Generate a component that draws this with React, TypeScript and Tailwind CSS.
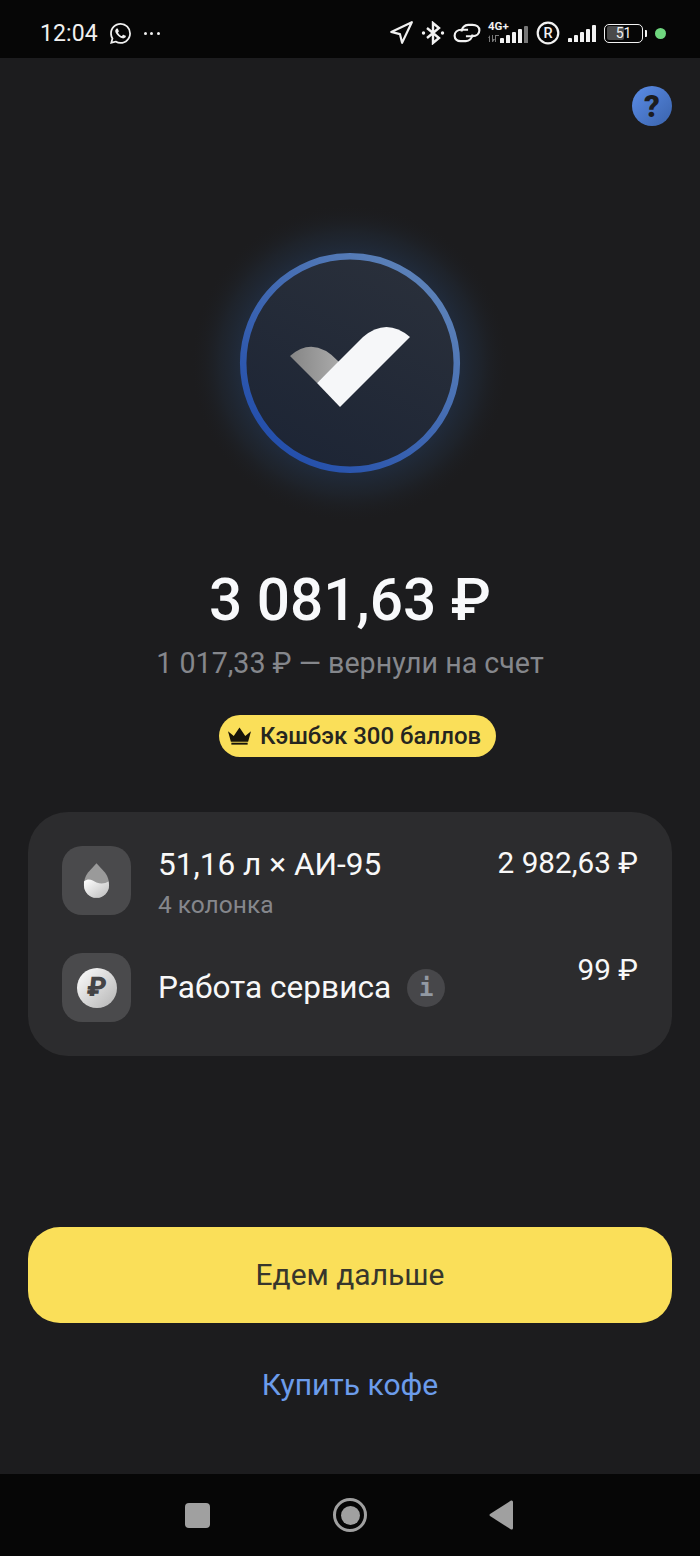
import { Navigation } from "lucide-react";
import { SiWhatsapp } from "react-icons/si";

function Bars({ h, dim }: { h: number[]; dim?: number }) {
  return (
    <div className="flex items-end gap-[2px] h-[17px]">
      {h.map((v, i) => (
        <div
          key={i}
          className={i === dim ? "w-[4px] rounded-t-[1px] bg-[#777777]" : "w-[4px] rounded-t-[1px] bg-[#f2f2f2]"}
          style={{ height: v }}
        />
      ))}
    </div>
  );
}

function StatusBar() {
  return (
    <header className="h-[58px] bg-[#060606] flex items-center justify-between pt-[8px] pl-[40px] pr-[34px] text-[#f0f0f0] shrink-0">
      <div className="flex items-center">
        <span className="text-[23px] leading-none font-normal tracking-[0.1px]">12:04</span>
        <SiWhatsapp className="ml-[12px] w-[21px] h-[21px]" />
        <div className="ml-[13px] flex gap-[3.5px]">
          <span className="w-[3px] h-[3px] rounded-full bg-[#f0f0f0]" />
          <span className="w-[3px] h-[3px] rounded-full bg-[#f0f0f0]" />
          <span className="w-[3px] h-[3px] rounded-full bg-[#f0f0f0]" />
        </div>
      </div>
      <div className="flex items-center">
        <Navigation className="w-[26px] h-[26px]" strokeWidth={2} />
        <svg width="24" height="24" viewBox="0 0 24 24" className="ml-[7px]" fill="none" stroke="#f2f2f2" strokeWidth="2.4">
          <path d="M6 7l12 10-6 5V2l6 5L6 17" />
          <circle cx="2.500" cy="12" r="1.700" fill="#f2f2f2" stroke="none" />
          <circle cx="21.500" cy="12" r="1.700" fill="#f2f2f2" stroke="none" />
        </svg>
        <svg width="28" height="20" viewBox="0 0 26 18" className="ml-[8px]" fill="none" stroke="#f2f2f2" strokeWidth="2">
          <path d="M14 6H8C4 6 1.500 8.500 1.500 11.500S4 17 8 16.500H12C15 16.500 18 14 18 10.500" />
          <path d="M12 12H18C22 12 24.500 9.500 24.500 6.500S22 1.500 18 1.500H14C11 1.500 8 4 8 7.500" />
        </svg>
        <div className="relative ml-[7px] w-[40px] h-[20px]">
          <span className="absolute left-0 top-[-2px] text-[11.500px] leading-[11px] font-bold">4G+</span>
          <svg width="11" height="7" viewBox="0 0 11 7" className="absolute left-0 bottom-[1px]" fill="#777777">
            <path d="M0 3l2-3v7H1V3zM4 0h1v4h2L5 7H4zM7 0h4v1H8v6H7z" />
          </svg>
          <div className="absolute right-0 bottom-0">
            <Bars h={[5, 8, 11, 14, 17]} dim={4} />
          </div>
        </div>
        <svg width="24" height="24" viewBox="0 0 24 24" className="ml-[8px]">
          <circle cx="12" cy="12" r="10.300" fill="none" stroke="#f2f2f2" strokeWidth="2.200" />
          <text x="12" y="17.200" textAnchor="middle" fontSize="14.500" fontWeight="500" fontFamily="Roboto" fill="#f2f2f2">R</text>
        </svg>
        <div className="ml-[8px]">
          <Bars h={[4, 7, 10, 13, 17]} />
        </div>
        <div className="ml-[8px] flex items-center">
          <div className="relative w-[39px] h-[19px] rounded-[5px] border-[1.5px] border-[#f2f2f2] p-[1.5px]">
            <div className="h-full w-[51%] rounded-[2px] bg-[#4a4a4a]" />
            <span className="absolute inset-0 flex items-center justify-center text-[14px] leading-none">51</span>
          </div>
          <div className="ml-[2px] w-[2px] h-[7px] rounded-r-[1px] bg-[#f2f2f2]" />
        </div>
        <span className="ml-[8px] w-[11px] h-[11px] rounded-full bg-[#6fd77f]" />
      </div>
    </header>
  );
}

function Hero() {
  return (
    <svg width="320" height="320" viewBox="0 0 320 320" className="mx-auto mt-[77px] block">
      <defs>
        <radialGradient id="glow">
          <stop offset="0.66" stopColor="#27436c" stopOpacity="0.42" />
          <stop offset="0.82" stopColor="#263c58" stopOpacity="0.22" />
          <stop offset="1" stopColor="#1c1c1e" stopOpacity="0" />
        </radialGradient>
        <linearGradient id="fill" x1="0.8" y1="0" x2="0.3" y2="1">
          <stop offset="0" stopColor="#2a303b" />
          <stop offset="1" stopColor="#1d2535" />
        </linearGradient>
        <linearGradient id="ring" x1="0.85" y1="0.15" x2="0.2" y2="0.9">
          <stop offset="0" stopColor="#5a80b8" />
          <stop offset="1" stopColor="#2550ac" />
        </linearGradient>
        <linearGradient id="wing" x1="0" y1="0" x2="1" y2="0">
          <stop offset="0" stopColor="#858585" />
          <stop offset="1" stopColor="#aaaaaa" />
        </linearGradient>
      </defs>
      <circle cx="160" cy="160" r="160" fill="url(#glow)" />
      <circle cx="160" cy="160" r="106.800" fill="url(#fill)" stroke="url(#ring)" strokeWidth="6.500" />
      <path d="M100 153 Q124 132 149 159 L127 180 Z" fill="url(#wing)" />
      <path d="M127 180 L173 134 Q196.500 114 220 134 L150 204 Z" fill="#f6f7f9" />
    </svg>
  );
}

function Tile({ children }: { children: React.ReactNode }) {
  return (
    <div className="w-[69px] h-[69px] rounded-[20px] bg-[#4a4a4c] flex items-center justify-center shrink-0">
      {children}
    </div>
  );
}

function Card() {
  return (
    <section className="h-[244px] rounded-[40px] bg-[#2c2c2e] px-[34px] pt-[34px]">
      <div className="flex items-start h-[69px]">
        <Tile>
          <svg width="27" height="35" viewBox="0 0 28 36">
            <defs>
              <linearGradient id="water" x1="0" y1="0" x2="1" y2="1">
                <stop offset="0" stopColor="#ffffff" />
                <stop offset="1" stopColor="#bcbcbc" />
              </linearGradient>
            </defs>
            <path d="M14 0 L23 10 C26 14 27 18 27 23 A13 13 0 0 1 1 23 C1 18 2 14 5 10Z" fill="#9a9a9a" />
            <path d="M1 19 C6 15 10 18 14 20 C19 22 23 21 26.500 19 Q27 21 27 23 A13 13 0 0 1 1 23 Q1 21 1 19Z" fill="url(#water)" />
          </svg>
        </Tile>
        <div className="ml-[27px] flex-1">
          <div className="text-[31.600px] leading-[36px] mt-[1px] text-[#f8f8f8]">51,16 л × АИ-95</div>
          <div className="text-[24.500px] leading-[30px] mt-[7px] text-[#85878c]">4 колонка</div>
        </div>
        <div className="text-[29.700px] leading-[34px] text-[#f8f8f8]">2 982,63 ₽</div>
      </div>
      <div className="flex items-start h-[69px] mt-[38px]">
        <Tile>
          <div className="w-[40px] h-[40px] rounded-full bg-linear-to-br from-[#ffffff] to-[#b4b4b4] flex items-center justify-center text-[27px] leading-none font-black text-[#444446]">
            <span className="-skew-x-6">₽</span>
          </div>
        </Tile>
        <div className="ml-[27px] flex-1 flex items-center h-[69px]">
          <span className="text-[31.600px] leading-[36px] text-[#f8f8f8]">Работа сервиса</span>
          <span className="ml-[16px] w-[38px] h-[38px] rounded-full bg-[#47474a] flex items-center justify-center text-[24px] leading-none font-bold font-['DejaVu_Sans_Mono'] text-[#9299a3]">
            i
          </span>
        </div>
        <div className="text-[29.700px] leading-[34px] text-[#f8f8f8]">99 ₽</div>
      </div>
    </section>
  );
}

export default function App() {
  return (
    <div className="w-[700px] h-[1556px] flex flex-col bg-[#1c1c1e] font-['Roboto',sans-serif] overflow-hidden">
      <StatusBar />
      <main className="flex-1 flex flex-col px-[28px]">
        <div className="flex justify-end mt-[28px]">
          <div className="w-[40px] h-[40px] rounded-full bg-linear-to-br from-[#5b8de8] to-[#3a63ac] flex items-center justify-center text-[31px] leading-none font-black text-[#1c1c1e]">
            ?
          </div>
        </div>
        <Hero />
        <h1 className="mt-[44px] text-center text-[58.500px] leading-[66px] font-medium text-[#f8f9fb]">3 081,63 ₽</h1>
        <p className="mt-[12px] text-center text-[28.600px] leading-[36px] text-[#85878c]">1 017,33 ₽ — вернули на счет</p>
        <div className="mt-[34px] flex justify-center">
          <div className="ml-[15px] h-[42px] w-[277px] rounded-full bg-[#fadf59] flex items-center pl-[9px] text-[24px] leading-none font-medium text-[#25251f]">
            <svg width="23" height="18" viewBox="0 0 24 18" className="mr-[9px]" fill="#17140a">
              <path d="M0 4 L6 9 L12 0 L18 9 L24 4 L21 15 H3Z" />
              <rect x="3.500" y="16" width="17" height="2" />
            </svg>
            Кэшбэк 300 баллов
          </div>
        </div>
        <div className="mt-[55px]">
          <Card />
        </div>
        <button className="mt-[171px] h-[96px] rounded-[32px] bg-[#fadf59] text-[30px] leading-none text-[#37362c]">
          Едем дальше
        </button>
        <a className="mt-[42px] text-center text-[30px] leading-[40px] text-[#6c9ceb]">Купить кофе</a>
      </main>
      <nav className="h-[82px] shrink-0 bg-[#060606] flex items-center">
        <div className="ml-[185px] w-[25px] h-[25px] rounded-[4px] bg-[#a0a0a0]" />
        <div className="ml-[123px] w-[34px] h-[34px] rounded-full border-[3px] border-[#a0a0a0] flex items-center justify-center">
          <div className="w-[19px] h-[19px] rounded-full bg-[#a0a0a0]" />
        </div>
        <svg width="24" height="30" viewBox="0 0 24 30" className="ml-[122px]" fill="#a0a0a0">
          <path d="M22 0.500 Q24 0 24 2 V28 Q24 30 22 29.500 L1 16 Q0 15 1 14 Z" />
        </svg>
      </nav>
    </div>
  );
}
